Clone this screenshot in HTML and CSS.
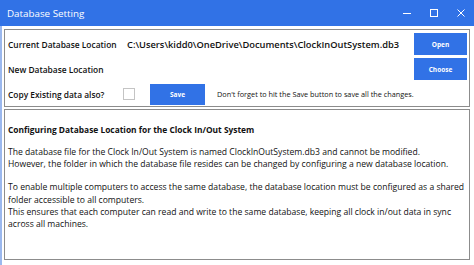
FILE: index.html
```html
<!DOCTYPE html>
<html lang="en">
<head>
    <meta charset="UTF-8">
    <meta name="viewport" content="width=device-width, initial-scale=1.0">
    <title>Database Setting</title>
    <link rel="stylesheet" href="styles.css">
</head>
<body>
    <div class="janela">
        <div class="barra-titulo">
            <span class="titulo">Database Setting</span>
            <div class="controles">
                <svg width="8" height="10" viewBox="0 0 8 10"><path d="M0 5.5h8" stroke="#fff" stroke-width="1"/></svg>
                <svg width="8" height="10" viewBox="0 0 8 10"><rect x="0.5" y="1.5" width="7" height="7" fill="none" stroke="#fff" stroke-width="1"/></svg>
                <svg width="8" height="10" viewBox="0 0 8 10"><path d="M0.5 1.5l7 7M7.5 1.5l-7 7" stroke="#fff" stroke-width="1"/></svg>
            </div>
        </div>
        <div class="conteudo">
            <div class="painel-local">
                <span class="rotulo">Current Database Location</span>
                <span class="caminho">C:\Users\kidd0\OneDrive\Documents\ClockInOutSystem.db3</span>
                <button class="botao">Open</button>

                <span class="rotulo">New Database Location</span>
                <span class="caminho"></span>
                <button class="botao">Choose</button>

                <span class="rotulo">Copy Existing data also?</span>
                <div class="linha-salvar">
                    <span class="caixa"></span>
                    <button class="botao salvar">Save</button>
                    <span class="aviso">Don't forget to hit the Save button to save all the changes.</span>
                </div>
            </div>
            <div class="painel-info">
                <h2>Configuring Database Location for the Clock In/Out System</h2>
                <p>The database file for the Clock In/Out System is named ClockInOutSystem.db3 and cannot be modified.<br>
                However, the folder in which the database file resides can be changed by configuring a new database location.</p>
                <p>To enable multiple computers to access the same database, the database location must be configured as a shared<br>
                folder accessible to all computers.<br>
                This ensures that each computer can read and write to the same database, keeping all clock in/out data in sync<br>
                across all machines.</p>
            </div>
        </div>
    </div>
</body>
</html>
```

FILE: styles.css
```css
* {
    box-sizing: border-box;
    margin: 0;
    padding: 0;
    font-family: 'Open Sans', 'Noto Sans', sans-serif;
}

body {
    width: 474px;
    height: 265px;
    overflow: hidden;
    background-color: #fff;
    color: #111;
}

.janela {
    height: 265px;
    border-left: 2px solid #9bb8ee;
    display: flex;
    flex-direction: column;
}

.barra-titulo {
    height: 26px;
    margin-left: -2px;
    padding: 0 9px 0 7px;
    background-color: #3172e6;
    color: #fff;
    display: flex;
    align-items: center;
    justify-content: space-between;
}

.titulo {
    font-size: 9.8px;
    margin-top: 1px;
}

.controles {
    display: flex;
    gap: 19px;
}

.conteudo {
    flex: 1;
    padding: 3px 4px 5px 2px;
    display: flex;
    flex-direction: column;
    gap: 2px;
}

.painel-local {
    border: 1px solid #8c8c8c;
    padding: 3px 2px 1px 3px;
    display: grid;
    grid-template-columns: 115px 1fr 53px;
    grid-auto-rows: 22px;
    row-gap: 3px;
    align-items: center;
}

.rotulo {
    font-size: 8.4px;
    font-weight: 600;
}

.caminho {
    font-size: 9.3px;
    font-weight: 600;
    padding-left: 4px;
}

.botao {
    height: 22px;
    border: none;
    background-color: #3172e6;
    color: #fff;
    font-size: 6.5px;
    font-weight: 700;
}

.linha-salvar {
    grid-column: 2 / 4;
    display: flex;
    align-items: center;
    height: 22px;
}

.caixa {
    width: 12px;
    height: 12px;
    border: 1px solid #c4c4c4;
    background-color: #fff;
}

.salvar {
    width: 55px;
    height: 21px;
    margin-left: 15px;
}

.aviso {
    font-size: 7.3px;
    margin-left: 12px;
}

.painel-info {
    flex: 1;
    border: 1px solid #8c8c8c;
    padding: 14px 3px 0 3px;
}

h2 {
    font-size: 8.4px;
    font-weight: 700;
    margin-bottom: 11px;
}

p {
    font-size: 8.6px;
    line-height: 12.2px;
    margin-bottom: 11px;
    white-space: nowrap;
}
```
